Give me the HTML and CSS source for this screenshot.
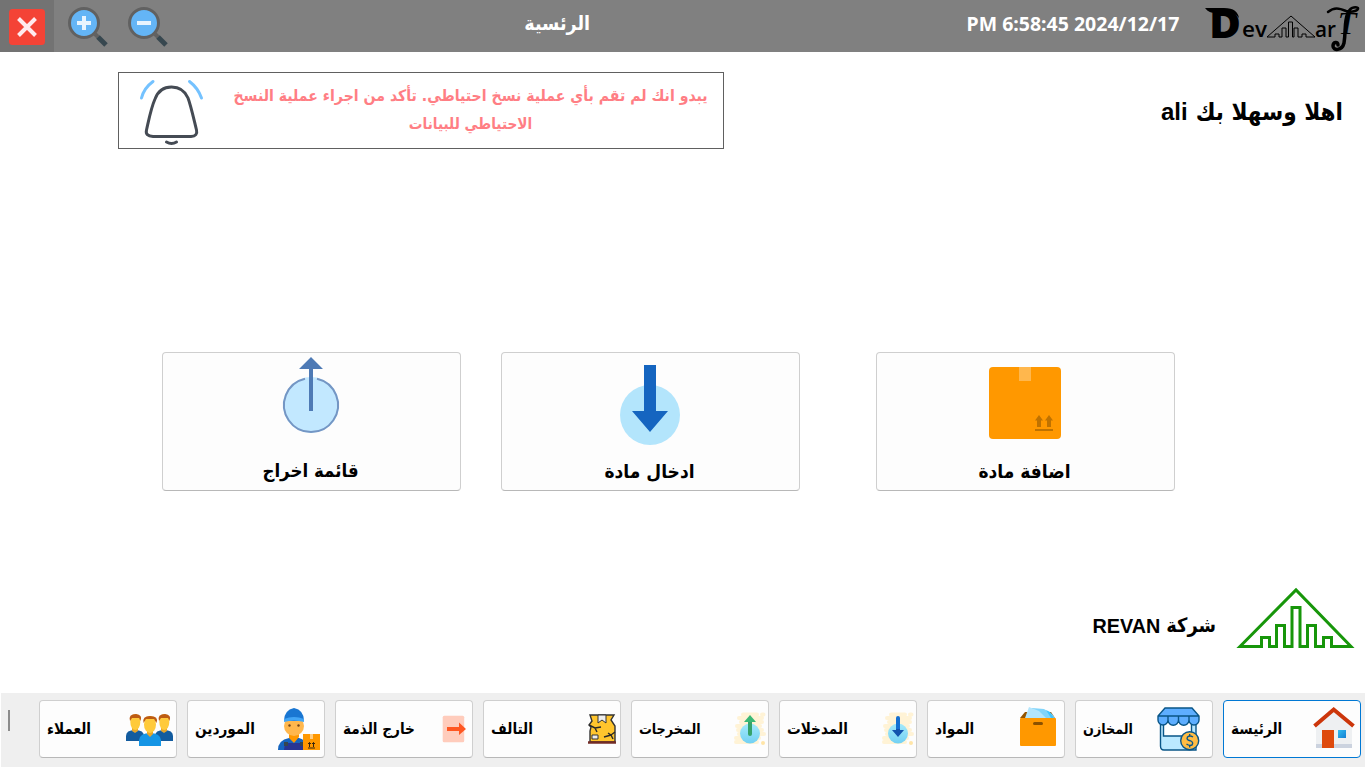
FILE: index.html
```html
<!DOCTYPE html>
<html lang="ar" dir="rtl">
<head>
<meta charset="utf-8">
<title>الرئسية</title>
<link rel="stylesheet" href="styles.css">
</head>
<body>
<div class="app">
  <header class="topbar">
    <svg class="brand" viewBox="-10 0 165 52">
      <path class="brand-fill" d="M-5 8H14C24 8 28 12 29 18C24 12 20 13 11 13H7C1 13-2 12-5 8Z"/>
      <text class="brand-d" x="-1" y="37.500" textLength="32" lengthAdjust="spacingAndGlyphs">D</text>
      <text class="brand-s" x="32" y="37" textLength="25" lengthAdjust="spacingAndGlyphs">ev</text>
      <text class="brand-s" x="105" y="37" textLength="21" lengthAdjust="spacingAndGlyphs">ar</text>
      <path class="brand-line" d="M57 37L81 16L105 37H96V34H92V37H88V28H84V37M84 37H82.500V22H78.500V37H76V28H72V37H69V34H65V37H57"/>
      <text class="brand-t" x="128" y="34">T</text>
      <path class="brand-curl" d="M118 12C124 7 129 8 136 11C143 13 149 10 148 8C145 6 139 8 138 13"/>
      <path class="brand-curl thick" d="M138 13C134 22 136 31 134 43C132 51 123 51 123 46C123 42 128 41 128 45"/>
    </svg>
    <div class="clock" dir="ltr"><span>PM 6:58:45 2024/12/17</span></div>
    <h1 class="page-title"><span>الرئسية</span></h1>
    <div class="tools">
      <svg class="tool" viewBox="0 0 40 40"><path d="M27 27L30 30" stroke="#616161" stroke-width="4"/><path d="M30 30L38 38" stroke="#37474f" stroke-width="5"/><circle cx="16" cy="16" r="14.500" fill="#64b5f6" stroke="#616161" stroke-width="3"/><path d="M9 16H23" stroke="#e8f4fe" stroke-width="4"/></svg>
      <svg class="tool" viewBox="0 0 40 40"><path d="M27 27L30 30" stroke="#616161" stroke-width="4"/><path d="M30 30L38 38" stroke="#37474f" stroke-width="5"/><circle cx="16" cy="16" r="14.500" fill="#64b5f6" stroke="#616161" stroke-width="3"/><path d="M9 16H23M16 9V23" stroke="#e8f4fe" stroke-width="4"/></svg>
    </div>
    <div class="close"><svg viewBox="0 0 36 36"><rect width="36" height="36" rx="3.500" fill="#f44336"/><path d="M9.500 9.500L26.500 26.500M26.500 9.500L9.500 26.500" stroke="#ffeaee" stroke-width="4"/></svg></div>
  </header>

  <section class="intro">
    <div class="welcome"><span>اهلا وسهلا بك</span><span class="latin">ali</span></div>
    <div class="alert">
      <p class="alert-text"><span>يبدو انك لم تقم بأي عملية نسخ احتياطي. تأكد من اجراء عملية النسخ</span><span class="second">الاحتياطي للبيانات</span></p>
      <svg class="bell" viewBox="0 0 100 75"><g fill="none" stroke-linecap="round" stroke-width="3"><path stroke="#454b54" d="M52.500 14C61 14 66 18 69 25C72 33 75 47 77.500 57Q79 63 72 63.500H34Q26 63 27.500 57C30 46 32 35 36 26C39 18 45 14 52.500 14ZM47.500 69Q52.500 72 57.500 69"/><path stroke="#74c2ff" d="M22.500 25Q25 15 34 8.500M70.500 8.500Q79 15 82.500 25"/></g></svg>
    </div>
  </section>

  <section class="cards">
    <div class="card"><svg viewBox="0 0 100 90"><rect x="14" y="8" width="72" height="72" rx="4" fill="#ff9800"/><path fill="#ffb74d" d="M44 8H56V22H44z"/><path fill="#bf7200" d="M60 70H78V72H60zM64 56L68 61.500H66V68H62V61.500H60zM74 56L78 61.500H76V68H72V61.500H70z"/></svg><span>اضافة مادة</span></div>
    <div class="card in"><svg viewBox="0 0 100 90"><circle cx="50" cy="56" r="30" fill="#b3e5fc"/><path fill="#1565c0" d="M44 6H56V52H68L50 73L32 52H44z"/></svg><span>ادخال مادة</span></div>
    <div class="card out"><svg viewBox="0 0 100 90"><circle cx="50" cy="46" r="28" fill="#c2e8ff"/><path fill="none" stroke="#7496c4" stroke-width="2" d="M44 19.700A27 27 0 1 0 56 19.700"/><path fill="#4e7ab5" d="M50-2L62 10H52V52H48V10H38z"/></svg><span>قائمة اخراج</span></div>
  </section>

  <section class="company">
    <svg class="company-logo" viewBox="0 0 120 66"><path fill="none" stroke="#17960a" stroke-width="3" d="M4 62.500L60 6L115 62.500H95.500V53.500H87.500V62.500H79.500V41.500H71.500V62.500H64V23.500H56V62.500H48.500V41.500H40.500V62.500H33.500V53.500H25.500V62.500H4Z"/></svg>
    <div class="company-name"><span>شركة</span><span class="latin">REVAN</span></div>
  </section>

  <nav class="dock">
    <div class="btn active"><svg viewBox="0 0 56 56"><path fill="#eef0f2" d="M12 22L30 7L48 22V47H12z"/><path fill="#ccd3df" d="M12 43H48V47H12z"/><path fill="#de4a0d" d="M18 29H30V47H18z"/><path fill="url(#sky)" d="M34 29H42V37H34z"/><path d="M10.500 25L29.700 8.500L49.500 25" fill="none" stroke="#cc360b" stroke-width="4"/></svg><span>الرئيسة</span></div>
    <div class="btn narrow"><svg viewBox="0 0 56 56"><g stroke="#0a5687" stroke-width="1.400"><path fill="#bbe9ff" d="M4.500 18H40V49H8Q4.500 49 4.500 45z"/><path fill="#fff" d="M7.500 20H35.500V35H7.500z"/><path fill="#5eaeff" d="M9 7H36L43 15V19A5 5 0 0 1 33 19A5 5 0 0 1 22.500 19A5 5 0 0 1 12 19A5 5 0 0 1 2 19V15zM2 15H43M12 15V19M22.500 15V19M33 15V19"/><circle cx="33.700" cy="39.700" r="9" fill="#ffbc43"/><path fill="none" d="M37 36Q34 34 31.500 36Q30 39 34 39.700Q38 41 36 44Q33 45 30.500 43M33.700 33V35M33.700 44.500V46.500"/></g></svg><span>المخازن</span></div>
    <div class="btn"><svg viewBox="0 0 56 56"><path fill="#955500" d="M17 11H43L47 17H12z"/><path fill="#81d4fa" d="M24 7L36 8L44 13L47 17H20z"/><path fill="#40c4ff" d="M38 9L42 11L46 17H43z"/><path fill="#b3e5fc" d="M21 6L31 10L38 17H17z"/><rect x="12" y="17" width="36" height="28" rx="1" fill="#ff9800"/><rect x="25" y="21" width="10" height="3" rx="1.500" fill="#8a5100"/></svg><span>المواد</span></div>
    <div class="btn"><svg viewBox="0 0 56 56"><path d="M31 13.500H45M27 17H50M29 21H50M25 25H48M26 29H50M27 33H52M24 37H47M24 41H45M50 13.500H51.500" stroke="#fff3d6" stroke-width="4" stroke-linecap="round"/><circle cx="51" cy="42" r="2" fill="#ffe5a8"/><circle cx="38" cy="32.500" r="10" fill="url(#orb)"/><path d="M38 17V32" stroke="#146fd1" stroke-width="4" stroke-linecap="round"/><path fill="#1253ae" d="M36 28H40V29H44L38 36L32 29H36z"/></svg><span>المدخلات</span></div>
    <div class="btn narrow"><svg viewBox="0 0 56 56"><path d="M31 13.500H45M27 17H50M29 21H50M25 25H48M26 29H50M27 33H52M24 37H47M24 41H45M50 13.500H51.500" stroke="#fff3d6" stroke-width="4" stroke-linecap="round"/><circle cx="51" cy="42" r="2" fill="#ffe5a8"/><circle cx="38" cy="32.500" r="10" fill="url(#orb)"/><path d="M38 19V33" stroke="#35a36b" stroke-width="4" stroke-linecap="round"/><path fill="#3ab875" d="M38 14L44 21H32z"/></svg><span>المخرجات</span></div>
    <div class="btn"><svg viewBox="0 0 56 56"><path fill="#ffc52d" stroke="#333" stroke-width="1.400" d="M26 14H50L47 19L51 25V41H26V30L27 26L25 24L28 20z"/><path fill="#eee" stroke="#333" d="M34 14H42V22L38 19L34 22z"/><path fill="none" stroke="#292929" stroke-width="1.400" d="M25 24L31 27L37 26M31 27L33 31M51 31L47 34L44 32M47 34L49 38M47 34L40 36"/><path fill="#eee" stroke="#333" d="M28 34H34V38H28z"/><path stroke="#722b26" stroke-width="2.500" d="M24 41.500H52"/></svg><span>التالف</span></div>
    <div class="btn"><svg viewBox="0 0 56 56"><rect x="26.700" y="14.700" width="21.500" height="26.500" rx="1.500" fill="#ffccbc"/><path fill="#ff5722" d="M31 26H43V21.500L50 28L43 34V30H31z"/></svg><span>خارج الذمة</span></div>
    <div class="btn"><svg viewBox="0 0 56 56"><path fill="#1565c0" d="M10 49Q10 39 21 37H31Q38 38 40 49z"/><path fill="#283593" d="M17 42H37V49H16z"/><path fill="#ff9800" d="M21 32H31V36L26 42L21 37z"/><path stroke="#37474f" stroke-width="4" d="M18 41V45M34 41V45"/><ellipse cx="26" cy="25" rx="10" ry="10" fill="#ffb74d"/><circle cx="21.500" cy="24.500" r="1.200" fill="#784719"/><circle cx="30.500" cy="24.500" r="1.200" fill="#784719"/><path fill="#1976d2" d="M16 20Q16 9 26 7Q36 9 36 20z"/><path fill="#42a5f5" d="M16 18Q26 14 36 18V21Q26 18 16 21z"/><path fill="#ff9800" d="M35 33H52V49H35z"/><path fill="#ffcc80" d="M42 33H45V38H42z"/><path fill="none" stroke="#37260e" d="M40 47H47M41.500 46V41.500M45.500 46V41.500M40 43L41.500 41.500L43 43M44 43L45.500 41.500L47 43"/></svg><span>الموردين</span></div>
    <div class="btn"><svg viewBox="0 0 56 56"><g id="peer"><path fill="#135c9f" d="M6 40V35Q6 29 15 29T24 35V40z"/><path fill="#e5a52b" d="M12 25H18V30L15 32L12 30z"/><ellipse cx="15.300" cy="21" rx="5" ry="8" fill="#ffca3b"/><path fill="#bd5b12" d="M10 20Q8 13 16 13Q23 14 20.500 20L19 17H12z"/></g><use href="#peer" x="29"/><path fill="#1595e5" d="M19 45V39Q20 32 30 32T41 39V45z"/><path fill="#e5a52b" d="M27 28H33V33L30 36L27 33z"/><ellipse cx="30" cy="23.500" rx="6" ry="8.500" fill="#ffca3b"/><path fill="#bd5b12" d="M23.500 22Q22 15 30 15Q39 15 36.500 22L34 18H26z"/></svg><span>العملاء</span></div>
    <i class="grip"></i>
  </nav>
</div>
<svg class="defs"><defs><linearGradient id="sky" x2="1" y2="1"><stop stop-color="#31bdf1"/><stop offset="1" stop-color="#147ed2"/></linearGradient><linearGradient id="orb" x2="0" y2="1"><stop stop-color="#a5eafb"/><stop offset="1" stop-color="#72d0f3"/></linearGradient></defs></svg>
</body>
</html>
```
FILE: styles.css
```css
* { box-sizing: border-box; }
body { margin: 0; background: #fff; color: #000; font-family: "DejaVu Sans Condensed", "DejaVu Sans", sans-serif; font-weight: 700; overflow: hidden; }
span { display: block; white-space: nowrap; }
svg { display: block; flex: none; overflow: visible; }
.app { display: flex; flex-direction: column; height: 767px; width: 1365px; }
.defs { position: absolute; width: 0; height: 0; }
.latin { font-family: "Liberation Sans", Arial, sans-serif; }

.topbar { display: flex; height: 52px; flex: none; background: #808080; color: #fff; }
.brand { width: 165px; height: 52px; direction: ltr; }
.brand text { fill: #000; font-family: "Open Sans", sans-serif; font-weight: 700; }
.brand .brand-d { font-size: 38px; font-weight: 800; }
.brand .brand-s { font-size: 22px; font-weight: 600; }
.brand .brand-t { font: italic 400 32px "Liberation Serif", serif; }
.brand-line { fill: none; stroke: #000; stroke-width: 1; }
.brand-curl { fill: none; stroke: #000; stroke-width: 2.5; stroke-linecap: round; }
.brand-curl.thick { stroke-width: 3.5; }
.clock { width: 254px; padding: 11px 0 0; display: flex; justify-content: center; font-family: "Noto Sans", sans-serif; font-size: 19.5px; line-height: 26px; }
.page-title { margin: 0; width: 778px; padding: 11px 356px 0 0; font-size: 19.5px; line-height: 26px; }
.tools { display: flex; gap: 20px; width: 114px; padding: 7px 0 0 0; }
.tool { width: 40px; height: 40px; }
.close { width: 54px; height: 52px; padding: 9px; background: #737373; }
.close svg { width: 36px; height: 36px; }

.intro { display: flex; justify-content: space-between; height: 300px; flex: none; padding: 20px 22px 0 118px; }
.welcome { display: flex; gap: 8px; font-size: 24px; line-height: 30px; padding-top: 25px; }
.alert { display: flex; justify-content: flex-end; width: 606px; height: 77px; border: 1px solid #606060; }
.alert-text { margin: 0; width: 501px; padding-top: 9px; display: flex; flex-direction: column; align-items: center; color: #ff7e84; font-size: 15.7px; line-height: 28px; }
.alert { padding-right: 2px; }
.alert-text { margin-left: 1px; }
.second { font-size: 15.2px; }
.bell { width: 100px; height: 75px; }

.cards { display: flex; height: 230px; flex: none; padding-right: 190px; }
.card { display: flex; flex-direction: column; align-items: center; width: 299px; height: 139px; padding: 6px 2px 0 0; border: 1px solid #cfcfcf; border-bottom-color: #b8b8b8; border-radius: 4px; background: #fdfdfd; font-size: 19px; line-height: 28px; }
.card.in { margin: 0 76px 0 40px; }
.card.out { font-size: 18.5px; }
.card svg { width: 100px; height: 90px; margin-bottom: 8px; }

.company { display: flex; align-items: flex-start; height: 111px; flex: none; padding-right: 9px; }
.company-logo { width: 120px; height: 66px; margin-top: 2px; }
.company-name { display: flex; gap: 6px; margin: 30px 20px 0 0; font-size: 19.8px; line-height: 28px; }

.dock { display: flex; gap: 10px; flex: 1; margin-left: 1px; padding: 7px 4px 9px 0; background: #efefef; }
.btn { display: flex; align-items: center; justify-content: space-between; width: 138px; flex: none; height: 58px; padding-left: 7px; border: 1px solid #cfcfcf; border-bottom-color: #b8b8b8; border-radius: 4px; background: #fdfdfd; font-size: 15.2px; line-height: 24px; }
.btn span { padding-bottom: 1px; }
.btn.narrow { font-size: 14.2px; }
.btn.active { border-color: #0078d4; }
.btn svg { width: 56px; height: 56px; }
.grip { width: 2px; height: 21px; margin: 10px 19px 0 0; background: #8b8b8b; }
```
